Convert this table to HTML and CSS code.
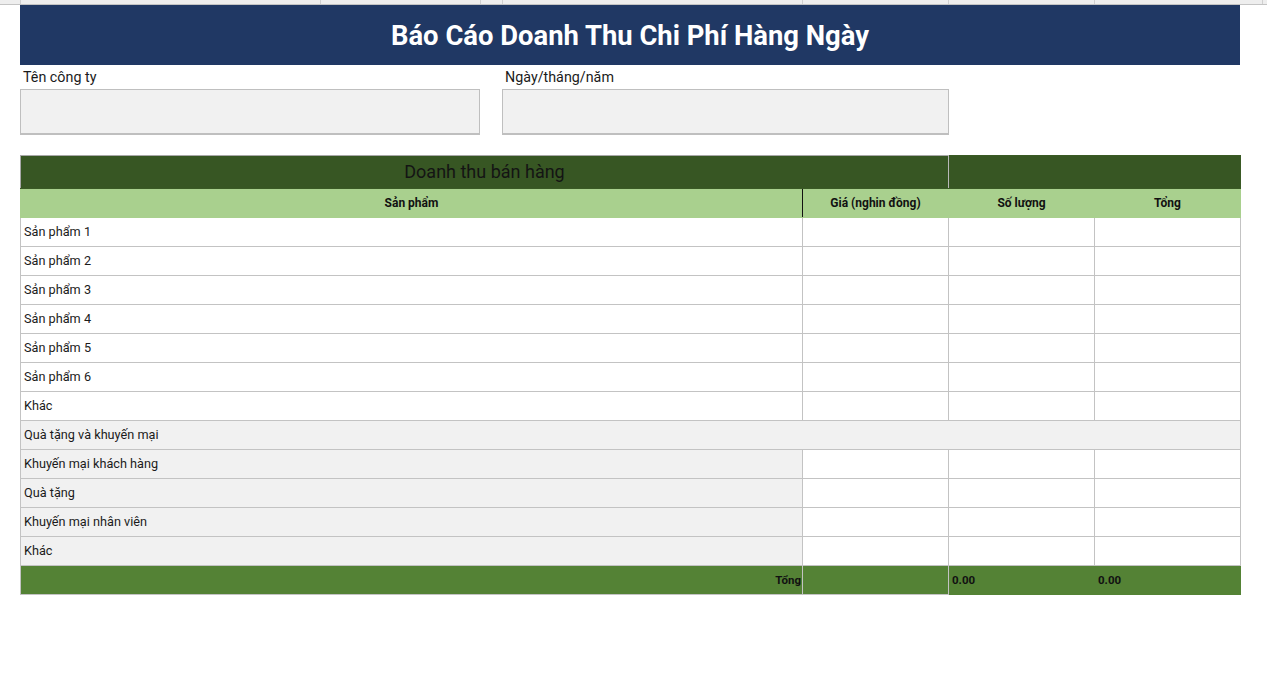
FILE: index.html
```html
<!DOCTYPE html>
<html lang="vi">
<head>
<meta charset="utf-8">
<title>Báo Cáo Doanh Thu Chi Phí Hàng Ngày</title>
<link rel="stylesheet" href="styles.css">
</head>
<body>
<div class="strip">
  <span class="sc c1"></span><span class="sc c2"></span><span class="sc c3"></span><span class="sc c4"></span><span class="sc c5"></span><span class="sc c6"></span><span class="sc c7"></span><span class="sc c8"></span>
</div>
<main class="sheet">
  <header class="banner"><h1>Báo Cáo Doanh Thu Chi Phí Hàng Ngày</h1></header>
  <section class="meta">
    <div class="field f-company">
      <label>Tên công ty</label>
      <div class="box"></div>
    </div>
    <div class="field f-date">
      <label>Ngày/tháng/năm</label>
      <div class="box"></div>
    </div>
  </section>
  <table class="grid">
    <colgroup>
      <col class="w-name"><col class="w-num"><col class="w-num"><col class="w-num">
    </colgroup>
    <tr class="r-title">
      <td colspan="2" class="t-left">Doanh thu bán hàng</td>
      <td colspan="2" class="t-right"></td>
    </tr>
    <tr class="r-head">
      <th class="h-name">Sản phẩm</th>
      <th>Giá (nghin đồng)</th>
      <th>Số lượng</th>
      <th>Tổng</th>
    </tr>
    <tr><td class="name">Sản phẩm 1</td><td></td><td></td><td></td></tr>
    <tr><td class="name">Sản phẩm 2</td><td></td><td></td><td></td></tr>
    <tr><td class="name">Sản phẩm 3</td><td></td><td></td><td></td></tr>
    <tr><td class="name">Sản phẩm 4</td><td></td><td></td><td></td></tr>
    <tr><td class="name">Sản phẩm 5</td><td></td><td></td><td></td></tr>
    <tr><td class="name">Sản phẩm 6</td><td></td><td></td><td></td></tr>
    <tr><td class="name">Khác</td><td></td><td></td><td></td></tr>
    <tr class="r-section"><td class="name" colspan="4">Quà tặng và khuyến mại</td></tr>
    <tr><td class="name gray">Khuyến mại khách hàng</td><td></td><td></td><td></td></tr>
    <tr><td class="name gray">Quà tặng</td><td></td><td></td><td></td></tr>
    <tr><td class="name gray">Khuyến mại nhân viên</td><td></td><td></td><td></td></tr>
    <tr><td class="name gray">Khác</td><td></td><td></td><td></td></tr>
    <tr class="r-total">
      <td class="tot-label">Tổng</td>
      <td></td>
      <td class="tot-val">0.00</td>
      <td class="tot-val tv-last">0.00</td>
    </tr>
  </table>
</main>
</body>
</html>
```

FILE: styles.css
```css
html, body {
  margin: 0;
  padding: 0;
  background: #ffffff;
}
body {
  font-family: Roboto, "Noto Sans", "Liberation Sans", sans-serif;
  color: #1b1b1b;
  width: 1267px;
  height: 678px;
  overflow: hidden;
}
.strip {
  height: 4px;
  background: #eeeeee;
  border-bottom: 1px solid #c4c4c4;
  position: relative;
}
.sc {
  position: absolute;
  top: 0;
  height: 4px;
  width: 1px;
  background: #d0d0d0;
}
.c1 { left: 20px; }
.c2 { left: 320px; }
.c3 { left: 480px; }
.c4 { left: 502px; }
.c5 { left: 802px; }
.c6 { left: 948px; }
.c7 { left: 1094px; }
.c8 { left: 1262px; }

.sheet {
  margin-left: 20px;
  width: 1220px;
}
.banner {
  width: 1220px;
  height: 60px;
  background: #203864;
  display: flex;
  align-items: center;
  justify-content: center;
}
.banner h1 {
  margin: 0;
  color: #ffffff;
  font-size: 27.4px;
  font-weight: 700;
  letter-spacing: 0;
  padding-top: 1px;
}
.meta {
  display: flex;
  gap: 22px;
  height: 90px;
}
.field {
  display: flex;
  flex-direction: column;
}
.f-company { width: 460px; }
.f-date { width: 447px; }
.field label {
  height: 24px;
  line-height: 25px;
  font-size: 14.3px;
  padding-left: 3px;
  color: #1b1b1b;
}
.box {
  height: 43px;
  background: #f1f1f1;
  border: 1px solid #bfbfbf;
  border-bottom-width: 2px;
}

.grid {
  border-collapse: collapse;
  table-layout: fixed;
  width: 1220px;
  font-size: 12px;
}
.w-name { width: 782px; }
.w-num { width: 146px; }
.grid td, .grid th {
  border: 1px solid #c3c3c3;
  padding: 0 3px 1px;
  height: 28px;
  box-sizing: border-box;
}
.grid tr { height: 29px; }
.r-title { height: 33px; }
.r-title td {
  background: #375623;
  height: 33px;
  border-color: #3a5a25;
  padding-bottom: 1px;
}
.t-left {
  text-align: center;
  font-size: 18px;
  color: #141414;
  border-top: 1px solid #a8a8a8 !important;
  border-left: 1px solid #a8a8a8 !important;
  border-right: 1px solid #b8b8b8 !important;
}
.r-head th {
  background: #a9d08e;
  font-weight: 700;
  font-size: 12px;
  color: #111111;
  border-color: #a9d08e;
  text-align: center;
  padding-top: 0;
  padding-bottom: 1px;
}
.r-head .h-name {
  border-right: 1px solid #111111;
}
.name {
  text-align: left;
  font-size: 12.7px;
  color: #1b1b1b;
}
.gray, .r-section td {
  background: #f1f1f1;
}
.r-total td {
  background: #548235;
  font-weight: 700;
  font-size: 11.5px;
  color: #111111;
}
.tot-label {
  text-align: right;
  padding-right: 1px !important;
}
.tot-val {
  text-align: left;
  border-color: #548235 !important;
  border-left: 1px solid #c3c3c3 !important;
}
.tv-last {
  border-left-color: #548235 !important;
}
```
